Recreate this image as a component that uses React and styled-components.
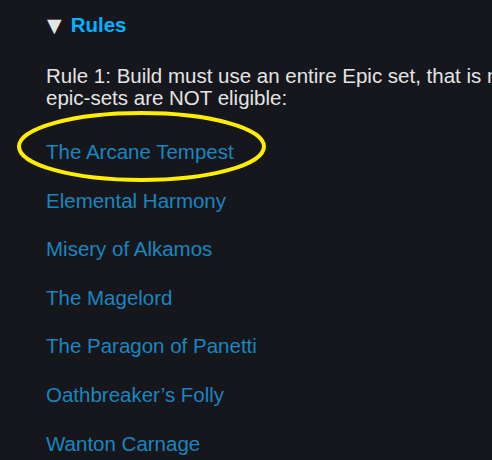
import React from 'react'
import styled, {createGlobalStyle} from 'styled-components'

const GlobalStyle = createGlobalStyle`
    html, body {
        margin: 0;
        padding: 0;
        background: #16171c;
    }
    body {
        font-family: "Liberation Sans", Arial, sans-serif;
        color: #e4e4e4;
    }
`;

const Page = styled.div`
    position: relative;
    width: 492px;
    height: 460px;
    overflow: hidden;
    padding: 13px 0 0 46px;
    box-sizing: border-box;
`;

const Details = styled.details`
    margin: 0;
`;

const Summary = styled.summary`
    list-style: none;
    display: flex;
    align-items: baseline;
    gap: 9px;
    font-size: 20.5px;
    font-weight: bold;
    line-height: 24px;
    cursor: pointer;

    &::-webkit-details-marker {
        display: none;
    }
`;

const Marker = styled.span`
    color: #e4e4e4;
    font-family: "DejaVu Sans", sans-serif;
    font-weight: normal;
    font-size: 19px;
    margin-left: 1px;
`;

const Title = styled.span`
    color: #00b2ff;
`;

const Text = styled.p`
    margin: 28px 0 32px;
    font-size: 20.5px;
    line-height: 22px;
    white-space: nowrap;
`;

const LinkList = styled.div`
    display: flex;
    flex-direction: column;
    align-items: flex-start;
    gap: 26.6px;
`;

const SetLink = styled.a`
    position: relative;
    color: #1a86bf;
    font-size: 20.5px;
    line-height: 22px;
    text-decoration: none;
`;

const Circle = styled.svg`
    position: absolute;
    left: -29px;
    top: -30px;
    overflow: visible;
    pointer-events: none;
`;

const sets = [
    'The Arcane Tempest',
    'Elemental Harmony',
    'Misery of Alkamos',
    'The Magelord',
    'The Paragon of Panetti',
    'Oathbreaker\u2019s Folly',
    'Wanton Carnage',
];

const App = () => {
    return (
        <>
            <GlobalStyle />
            <Page>
                <Details open>
                    <Summary>
                        <Marker>▼</Marker>
                        <Title>Rules</Title>
                    </Summary>
                    <Text>
                        Rule 1: Build must use an entire Epic set, that is not a part of the
                        <br />
                        epic-sets are NOT eligible:
                    </Text>
                    <LinkList>
                        {sets.map((name, i) => (
                            <SetLink href="#" key={name}>
                                {name}
                                {i === 0 && (
                                    <Circle width="249" height="71" viewBox="0 0 249 71">
                                        <ellipse cx="124.5" cy="35.5" rx="122.5" ry="33.5"
                                            fill="none" stroke="#ffee00" strokeWidth="4" />
                                    </Circle>
                                )}
                            </SetLink>
                        ))}
                    </LinkList>
                </Details>
            </Page>
        </>
    );
};

export default App
